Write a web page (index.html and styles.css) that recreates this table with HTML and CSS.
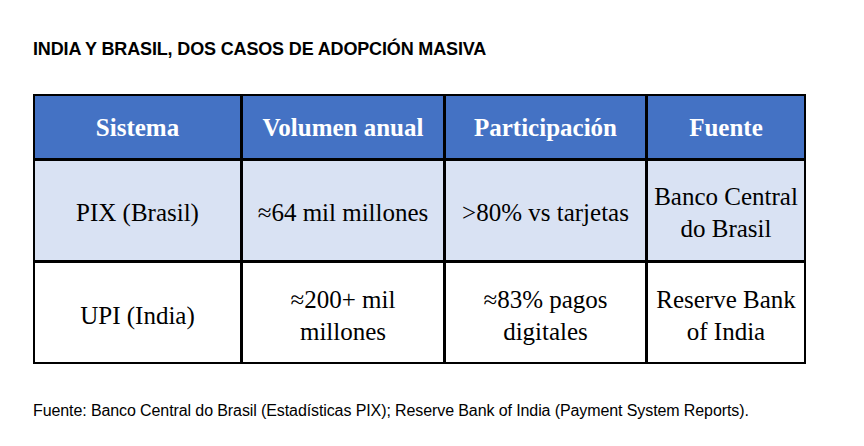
FILE: index.html
```html
<!DOCTYPE html>
<html lang="es">
<head>
<meta charset="utf-8">
<title>India y Brasil</title>
<link rel="stylesheet" href="styles.css">
</head>
<body>
<div class="page">
  <h1 class="title">INDIA Y BRASIL, DOS CASOS DE ADOPCIÓN MASIVA</h1>
  <table class="data">
    <thead>
      <tr>
        <th class="c1">Sistema</th>
        <th class="c2">Volumen anual</th>
        <th class="c3">Participación</th>
        <th class="c4">Fuente</th>
      </tr>
    </thead>
    <tbody>
      <tr class="r1">
        <td>PIX (Brasil)</td>
        <td>≈64 mil millones</td>
        <td>&gt;80% vs tarjetas</td>
        <td>Banco Central<br>do Brasil</td>
      </tr>
      <tr class="r2">
        <td>UPI (India)</td>
        <td>≈200+ mil<br>millones</td>
        <td>≈83% pagos<br>digitales</td>
        <td>Reserve Bank<br>of India</td>
      </tr>
    </tbody>
  </table>
  <p class="note">Fuente: Banco Central do Brasil (Estadísticas PIX); Reserve Bank of India (Payment System Reports).</p>
</div>
</body>
</html>
```

FILE: styles.css
```css
html, body {
  margin: 0;
  padding: 0;
  background: #ffffff;
}

.page {
  padding: 39px 0 0 33px;
}

.title {
  margin: 0;
  font-family: "Liberation Sans", Arial, sans-serif;
  font-weight: bold;
  font-size: 18px;
  line-height: 20px;
  letter-spacing: -0.15px;
  color: #000000;
}

.data {
  margin-top: 35px;
  border-collapse: separate;
  border-spacing: 0;
  border: 2px solid #000000;
  table-layout: fixed;
  width: 773px;
}

.data th,
.data td {
  box-sizing: border-box;
  font-family: "Liberation Serif", "Times New Roman", serif;
  font-size: 25px;
  line-height: 32px;
  color: #000000;
  text-align: center;
  vertical-align: middle;
  border-right: 3px solid #000000;
  border-bottom: 3px solid #000000;
  padding: 4px 2px 0 2px;
}

.data th:last-child,
.data td:last-child {
  border-right: none;
}

.data tbody tr:last-child td {
  border-bottom: none;
}

.c1 { width: 208px; }
.c2 { width: 203px; }
.c3 { width: 202px; }
.c4 { width: 156px; }

.data thead tr {
  height: 65px;
  background: #4472c4;
}

.data th {
  color: #ffffff;
  font-weight: bold;
  padding-top: 2px;
}

.r1 {
  height: 102px;
  background: #d9e2f3;
}

.r2 {
  height: 99px;
  background: #ffffff;
}

.r2 td {
  padding-top: 7px;
}

.note {
  margin: 38px 0 0 0;
  font-family: "Liberation Sans", Arial, sans-serif;
  font-size: 16px;
  line-height: 18px;
  letter-spacing: -0.1px;
  color: #000000;
}
```
